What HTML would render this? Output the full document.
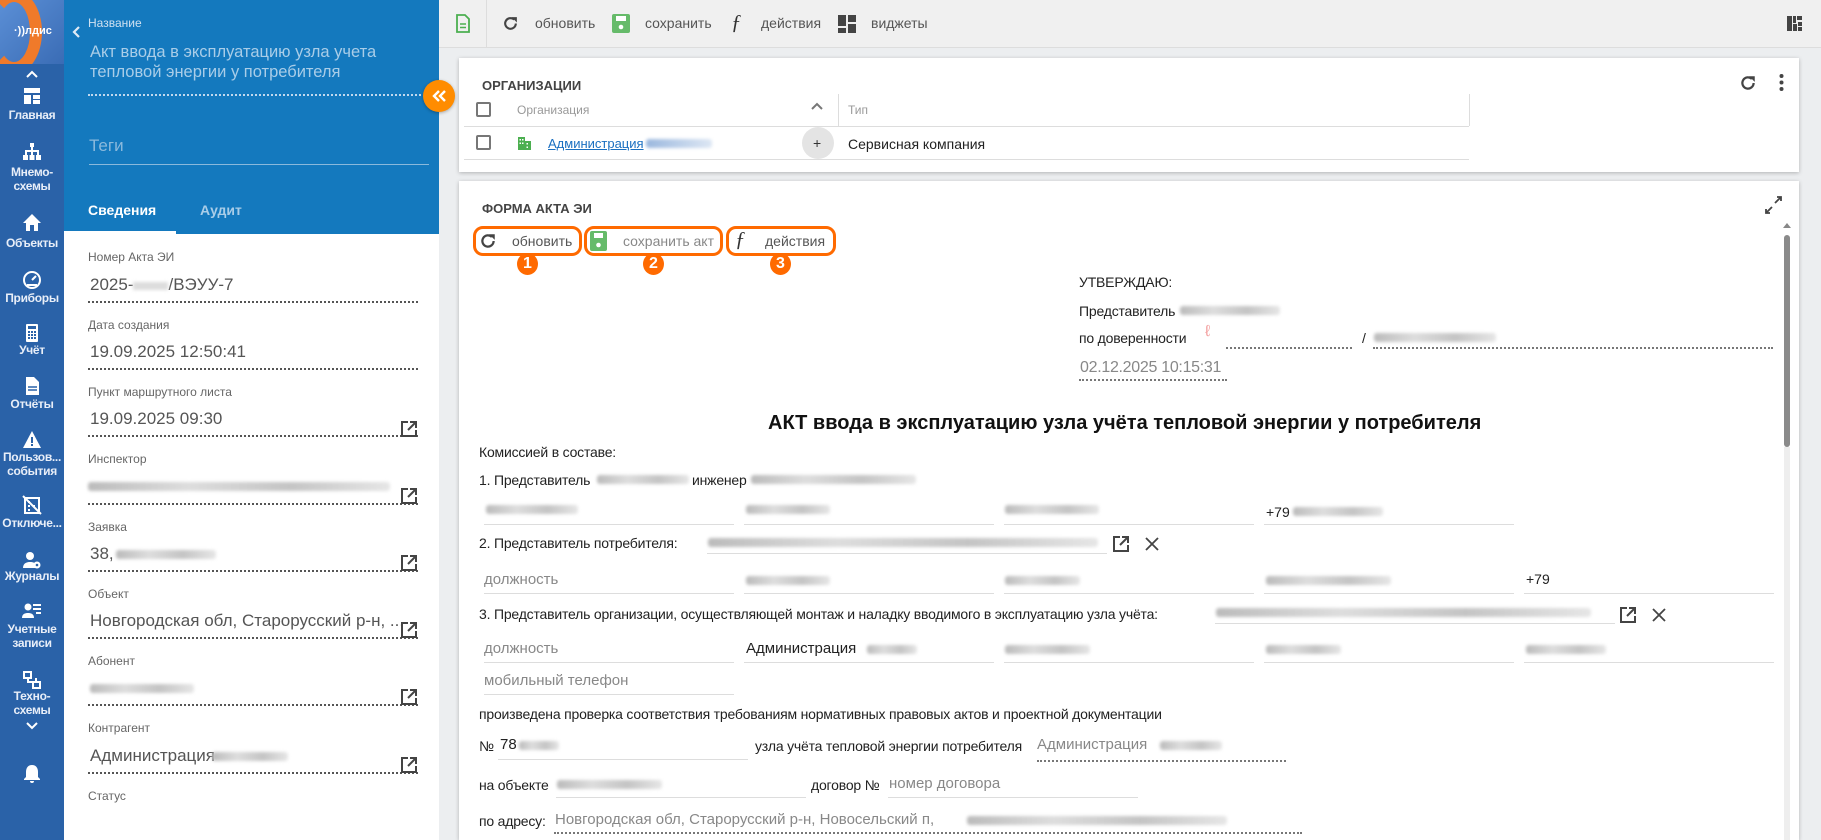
<!DOCTYPE html>
<html><head><meta charset="utf-8">
<style>
*{box-sizing:border-box;margin:0;padding:0}
html,body{width:1821px;height:840px;overflow:hidden}
body{background:#eceef0;font-family:"Liberation Sans","Noto Sans CJK SC",sans-serif;position:relative}
.a{position:absolute}
.t{position:absolute;white-space:nowrap;line-height:1}
.nav{left:0;top:0;width:64px;height:840px;background:#2a62a8}
.nl{position:absolute;left:0;width:64px;text-align:center;color:#e8eef8;font-size:12px;line-height:14px;font-weight:bold;letter-spacing:-.3px}
.ni{position:absolute;left:22px;width:20px;height:20px}
.side{left:64px;top:0;width:375px;height:840px;background:#fff}
.lab{font-size:12px;color:#666}
.val{font-size:17px;color:#555}
.dot{position:absolute;left:88px;width:330px;border-bottom:2px dotted #555}
.blur{position:absolute;height:9px;background:linear-gradient(90deg,#bbb,#ddd,#c4c4c4,#e6e6e6);filter:blur(1.5px);border-radius:3px}
.ext{position:absolute;width:18px;height:18px}
.f{font-size:14px;color:#222;letter-spacing:-.2px}
.g{color:#888}
.ul{position:absolute;border-bottom:1px solid #ddd}
.dl{position:absolute;border-bottom:2px dotted #777}
.card{position:absolute;background:#fff;box-shadow:0 1px 4px rgba(0,0,0,.25)}
.ob{position:absolute;border:3px solid #ff6a00;border-radius:10px;height:30px;top:226px}
.num{position:absolute;top:253px;width:21px;height:22px;border-radius:50%;background:#ff6a00;color:#fff;font-weight:bold;font-size:16px;text-align:center;line-height:22px}
.tb{font-size:14px;color:#555}
</style></head><body>

<!-- NAV -->
<div class="a nav">
 <div class="a" style="left:0;top:0;width:64px;height:64px;background:linear-gradient(135deg,#5b8fd6,#3a6cb5);overflow:hidden">
  <div class="a" style="left:-14px;top:-10px;width:56px;height:84px;border-radius:50%;border:12px solid #f07a2a;border-left-color:transparent;border-bottom-color:#f07a2a"></div>
  <div class="t" style="left:14px;top:26px;color:#fff;font-weight:bold;font-size:11px">·))лдис</div>
 </div>
 <svg class="a" style="left:26px;top:70px" width="12" height="8"><path d="M1 7L6 2L11 7" stroke="#fff" stroke-width="2" fill="none"/></svg>
 <svg class="ni" style="top:86px" viewBox="0 0 20 20"><path fill="#fff" d="M2 2h16v5H2zM2 9h7v9H2zM11 9h7v4h-7zM11 14h7v4h-7z"/></svg>
 <div class="nl" style="top:108px">Главная</div>
 <svg class="ni" style="top:142px" viewBox="0 0 20 20"><path fill="#fff" d="M8 1h4v4H8zM9 5h2v3H9zM3 8h14v2H3zM3 9h2v4H3zM9 9h2v4H9zM15 9h2v4h-2zM1 13h5v5H1zM7.5 13h5v5h-5zM14 13h5v5h-5z"/></svg>
 <div class="nl" style="top:165px">Мнемо-<br>схемы</div>
 <svg class="ni" style="top:213px" viewBox="0 0 20 20"><path fill="#fff" d="M10 1L1 10h3v8h4v-6h4v6h4v-8h3z"/></svg>
 <div class="nl" style="top:236px">Объекты</div>
 <svg class="ni" style="top:270px" viewBox="0 0 20 20"><circle cx="10" cy="10" r="8" stroke="#fff" stroke-width="2" fill="none"/><path d="M10 10l4-4" stroke="#fff" stroke-width="2"/><path d="M5 15h10" stroke="#fff" stroke-width="2"/></svg>
 <div class="nl" style="top:291px">Приборы</div>
 <svg class="ni" style="top:323px" viewBox="0 0 20 20"><rect x="4" y="1" width="12" height="18" rx="1" fill="#fff"/><rect x="6" y="3" width="8" height="3" fill="#2a62a8"/><path fill="#2a62a8" d="M6 8h2v2H6zM9 8h2v2H9zM12 8h2v2h-2zM6 11h2v2H6zM9 11h2v2H9zM12 11h2v2h-2zM6 14h2v2H6zM9 14h2v2H9zM12 14h2v2h-2z"/></svg>
 <div class="nl" style="top:343px">Учёт</div>
 <svg class="ni" style="top:376px" viewBox="0 0 20 20"><path fill="#fff" d="M4 1h8l5 5v13H4z"/><path stroke="#2a62a8" stroke-width="1.6" d="M6 11h9M6 14h9"/></svg>
 <div class="nl" style="top:397px">Отчёты</div>
 <svg class="ni" style="top:430px" viewBox="0 0 20 20"><path fill="#fff" d="M10 1L19 18H1z"/><path stroke="#2a62a8" stroke-width="2" d="M10 7v6M10 14v2"/></svg>
 <div class="nl" style="top:450px">Пользов...<br>события</div>
 <svg class="ni" style="top:495px" viewBox="0 0 20 20"><rect x="3" y="3" width="14" height="15" stroke="#fff" stroke-width="2" fill="none"/><path stroke="#fff" stroke-width="2" d="M1 1l18 18M6 7h2M6 11h2M11 11h2M6 15h2"/></svg>
 <div class="nl" style="top:516px">Отключе...</div>
 <svg class="ni" style="top:551px" viewBox="0 0 20 20"><circle cx="8" cy="5" r="4" fill="#fff"/><path fill="#fff" d="M1 17c0-5 4-6 7-6s5 1 6 2v4z"/><circle cx="15" cy="14" r="3.5" fill="#fff"/><circle cx="15" cy="14" r="1.3" fill="#2a62a8"/></svg>
 <div class="nl" style="top:569px">Журналы</div>
 <svg class="ni" style="top:601px" viewBox="0 0 20 20"><circle cx="6" cy="6" r="3.5" fill="#fff"/><path fill="#fff" d="M0 17c0-4 3-5 6-5s6 1 6 5z"/><path stroke="#fff" stroke-width="2" d="M11 4h8M11 8h8M14 12h5"/></svg>
 <div class="nl" style="top:622px">Учетные<br>записи</div>
 <svg class="ni" style="top:670px" viewBox="0 0 20 20"><path stroke="#fff" stroke-width="2" fill="none" d="M2 2h7v6H2zM11 12h7v6h-7zM6 8v4h4M14 8v4"/></svg>
 <div class="nl" style="top:689px">Техно-<br>схемы</div>
 <svg class="a" style="left:26px;top:722px" width="12" height="8"><path d="M1 1L6 6L11 1" stroke="#fff" stroke-width="2" fill="none"/></svg>
 <svg class="a" style="left:23px;top:764px" width="18" height="20" viewBox="0 0 18 20"><path fill="#fff" d="M9 1c-4 0-6 3-6 7v5l-2 2v1h16v-1l-2-2V8c0-4-2-7-6-7zM7 17h4a2 2 0 0 1-4 0z"/></svg>
</div>

<!-- SIDE PANEL -->
<div class="a side">
 <div class="a" style="left:0;top:0;width:375px;height:234px;background:#1479be"></div>
 <div class="a" style="left:0;top:231px;width:112px;height:3px;background:#fff"></div>
</div>
<svg class="a" style="left:71px;top:25px" width="10" height="14"><path d="M8 2L3 7L8 12" stroke="#dfeaf5" stroke-width="2.2" fill="none"/></svg>
<div class="t" style="left:88px;top:17px;font-size:12px;color:#cfe1f1">Название</div>
<div class="t" style="left:90px;top:42px;font-size:16.5px;color:#a9cde8;line-height:20px">Акт ввода в эксплуатацию узла учета<br>тепловой энергии у потребителя</div>
<div class="a" style="left:88px;top:94px;width:333px;border-bottom:2px dotted #c0d8ee"></div>
<div class="t" style="left:89px;top:137px;font-size:17px;color:#8ab9dc">Теги</div>
<div class="a" style="left:89px;top:164px;width:340px;border-bottom:1px solid #8ab9dc"></div>
<div class="t" style="left:88px;top:203px;font-size:14px;color:#fff;font-weight:bold">Сведения</div>
<div class="t" style="left:200px;top:203px;font-size:14px;color:#a9cde8;font-weight:bold">Аудит</div>
<div class="a" style="left:423px;top:80px;width:32px;height:32px;border-radius:50%;background:#ff8c00;box-shadow:0 1px 3px rgba(0,0,0,.3)"></div>
<svg class="a" style="left:431px;top:89px" width="16" height="14"><path d="M8 2L3 7L8 12M14 2L9 7L14 12" stroke="#fff" stroke-width="2.4" fill="none"/></svg>

<div class="t lab" style="left:88px;top:251px">Номер Акта ЭИ</div>
<div class="t val" style="left:90px;top:276px">2025-<span style="display:inline-block;width:35px;height:8px;background:#ddd;filter:blur(1.5px)"></span>/ВЭУУ-7</div>
<div class="dot" style="top:301px"></div>
<div class="t lab" style="left:88px;top:319px">Дата создания</div>
<div class="t val" style="left:90px;top:343px">19.09.2025 12:50:41</div>
<div class="dot" style="top:368px"></div>
<div class="t lab" style="left:88px;top:386px">Пункт маршрутного листа</div>
<div class="t val" style="left:90px;top:410px">19.09.2025 09:30</div>
<div class="dot" style="top:435px"></div>
<div class="t lab" style="left:88px;top:453px">Инспектор</div>
<div class="blur" style="left:88px;top:482px;width:302px"></div>
<div class="dot" style="top:503px"></div>
<div class="t lab" style="left:88px;top:521px">Заявка</div>
<div class="t val" style="left:90px;top:545px">38,</div>
<div class="blur" style="left:116px;top:550px;width:100px"></div>
<div class="dot" style="top:570px"></div>
<div class="t lab" style="left:88px;top:588px">Объект</div>
<div class="t val" style="left:90px;top:612px">Новгородская обл, Старорусский р-н, ...</div>
<div class="dot" style="top:637px"></div>
<div class="t lab" style="left:88px;top:655px">Абонент</div>
<div class="blur" style="left:90px;top:684px;width:104px"></div>
<div class="dot" style="top:704px"></div>
<div class="t lab" style="left:88px;top:722px">Контрагент</div>
<div class="t val" style="left:90px;top:747px">Администрация</div>
<div class="blur" style="left:212px;top:752px;width:76px"></div>
<div class="dot" style="top:772px"></div>
<div class="t lab" style="left:88px;top:790px">Статус</div>
<svg width="0" height="0" style="position:absolute"><defs><g id="ext"><path d="M8 2H2v14h14v-6" stroke="#444" stroke-width="2" fill="none"/><path d="M10 2h6v6M16 2L8 10" stroke="#444" stroke-width="2" fill="none"/></g></defs></svg>
<svg class="ext" style="left:400px;top:420px"><use href="#ext"/></svg>
<svg class="ext" style="left:400px;top:487px"><use href="#ext"/></svg>
<svg class="ext" style="left:400px;top:554px"><use href="#ext"/></svg>
<svg class="ext" style="left:400px;top:621px"><use href="#ext"/></svg>
<svg class="ext" style="left:400px;top:688px"><use href="#ext"/></svg>
<svg class="ext" style="left:400px;top:756px"><use href="#ext"/></svg>

<!-- TOOLBAR -->
<div class="a" style="left:439px;top:0;width:1382px;height:48px;background:#f0f0f0;border-bottom:1px solid #ddd"></div>
<svg class="a" style="left:456px;top:14px" width="14" height="19" viewBox="0 0 14 19"><path d="M1 1h8l4 4v13H1z" stroke="#4caf50" stroke-width="1.8" fill="none"/><path d="M4 10h6M4 13.5h6" stroke="#4caf50" stroke-width="1.6"/></svg>
<div class="a" style="left:486px;top:0;height:48px;border-left:1px solid #ddd"></div>
<svg class="a" style="left:502px;top:15px" width="17" height="17" viewBox="0 0 16 16"><path d="M13 8a5 5 0 1 1-1.5-3.6" stroke="#444" stroke-width="2" fill="none"/><path d="M9 2h5v5z" fill="#444"/></svg>
<div class="t tb" style="left:535px;top:16px">обновить</div>
<svg class="a" style="left:612px;top:14px" width="18" height="19"><rect width="18" height="19" rx="2" fill="#66bb6a"/><rect x="4" y="2" width="10" height="5" fill="#fff"/><circle cx="9" cy="13" r="2.3" fill="#fff"/></svg>
<div class="t tb" style="left:645px;top:16px">сохранить</div>
<div class="t" style="left:731px;top:12px;font-size:21px;font-style:italic;font-family:'Liberation Serif',serif;color:#333">ƒ</div>
<div class="t tb" style="left:761px;top:16px">действия</div>
<svg class="a" style="left:838px;top:15px" width="18" height="18"><path fill="#444" d="M0 0h8v11H0zM10 0h8v7h-8zM10 9h8v9h-8zM0 13h8v5H0z"/></svg>
<div class="t tb" style="left:871px;top:16px">виджеты</div>
<svg class="a" style="left:1787px;top:16px" width="16" height="15"><path fill="#444" d="M0 0h5v15H0zM6 0h3v7H6zM10 0h5v4h-5zM6 8h4v7H6zM11 6h4v4h-4zM11 11h4v4h-4z"/></svg>

<!-- CARD 1 -->
<div class="card" style="left:459px;top:58px;width:1340px;height:114px"></div>
<div class="t" style="left:482px;top:79px;font-size:13px;font-weight:bold;color:#444">ОРГАНИЗАЦИИ</div>
<div class="a" style="left:476px;top:102px;width:15px;height:15px;border:2px solid #777;border-radius:2px"></div>
<div class="t" style="left:517px;top:104px;font-size:12px;color:#999">Организация</div>
<svg class="a" style="left:811px;top:102px" width="12" height="8"><path d="M1 7L6 2L11 7" stroke="#777" stroke-width="2" fill="none"/></svg>
<div class="a" style="left:838px;top:94px;height:32px;border-left:1px solid #ddd"></div>
<div class="t" style="left:848px;top:104px;font-size:12px;color:#999">Тип</div>
<div class="a" style="left:464px;top:126px;width:1005px;border-bottom:1px solid #ddd"></div>
<div class="a" style="left:1469px;top:94px;height:32px;border-left:1px solid #ddd"></div>
<div class="a" style="left:476px;top:135px;width:15px;height:15px;border:2px solid #777;border-radius:2px"></div>
<svg class="a" style="left:518px;top:137px" width="13" height="13"><path fill="#4caf50" d="M0 0h7v13H0zM7 4h6v9H7z"/><path fill="#fff" d="M1.5 2h1.5v1.5H1.5zM4 2h1.5v1.5H4zM1.5 5.5h1.5v1.5H1.5zM4 5.5h1.5v1.5H4zM8.5 6h1.5v1.5H8.5zM8.5 9.5h1.5v1.5H8.5z"/></svg>
<div class="t" style="left:548px;top:137px;font-size:13px;color:#1a6fc0;text-decoration:underline">Администрация</div>
<div class="blur" style="left:646px;top:139px;width:66px;background:linear-gradient(90deg,#9bb8de,#dde7f4)"></div>
<div class="a" style="left:802px;top:127px;width:32px;height:32px;border-radius:50%;background:#e4e4e4"></div>
<div class="t" style="left:813px;top:136px;font-size:14px;color:#333">+</div>
<div class="t" style="left:848px;top:137px;font-size:14px;color:#222">Сервисная компания</div>
<div class="a" style="left:464px;top:159px;width:1005px;border-bottom:1px solid #ddd"></div>
<svg class="a" style="left:1739px;top:74px" width="18" height="18" viewBox="0 0 16 16"><path d="M13 8a5 5 0 1 1-1.5-3.6" stroke="#444" stroke-width="2" fill="none"/><path d="M9 2h5v5z" fill="#444"/></svg>
<svg class="a" style="left:1779px;top:74px" width="5" height="17"><circle cx="2.5" cy="2" r="2" fill="#444"/><circle cx="2.5" cy="8.5" r="2" fill="#444"/><circle cx="2.5" cy="15" r="2" fill="#444"/></svg>

<!-- CARD 2 -->
<div class="card" style="left:459px;top:181px;width:1340px;height:659px"></div>
<div class="t" style="left:482px;top:202px;font-size:13px;font-weight:bold;color:#444">ФОРМА АКТА ЭИ</div>
<svg class="a" style="left:1764px;top:196px" width="19" height="18"><path d="M11 7L17 1M13 1h4v4M8 11L2 17M2 13v4h4" stroke="#444" stroke-width="1.8" fill="none"/></svg>
<svg class="a" style="left:1783px;top:222px" width="8" height="6"><path d="M0 6L4 1L8 6z" fill="#888"/></svg>
<div class="a" style="left:1784px;top:235px;width:6px;height:212px;border-radius:3px;background:#8a8a8a"></div>
<div class="a" style="left:1784px;top:447px;width:6px;height:400px;background:#eee"></div>

<div class="ob" style="left:473px;width:109px"></div>
<div class="ob" style="left:584px;width:139px"></div>
<div class="ob" style="left:726px;width:110px"></div>
<svg class="a" style="left:479px;top:232px" width="18" height="18" viewBox="0 0 16 16"><path d="M13 8a5 5 0 1 1-1.5-3.6" stroke="#444" stroke-width="2" fill="none"/><path d="M9 2h5v5z" fill="#444"/></svg>
<div class="t" style="left:512px;top:234px;font-size:14px;color:#555">обновить</div>
<svg class="a" style="left:590px;top:231px" width="17" height="20"><rect width="17" height="20" rx="2" fill="#66bb6a"/><rect x="4" y="2" width="9" height="5" fill="#fff"/><circle cx="8.5" cy="14" r="2.3" fill="#fff"/></svg>
<div class="t" style="left:623px;top:234px;font-size:14px;color:#888">сохранить акт</div>
<div class="t" style="left:735px;top:229px;font-size:21px;font-style:italic;font-family:'Liberation Serif',serif;color:#333">ƒ</div>
<div class="t" style="left:765px;top:234px;font-size:14px;color:#555">действия</div>
<div class="num" style="left:517px">1</div>
<div class="num" style="left:643px">2</div>
<div class="num" style="left:770px">3</div>

<div class="t f" style="left:1079px;top:275px">УТВЕРЖДАЮ:</div>
<div class="t f" style="left:1079px;top:304px">Представитель</div>
<div class="blur" style="left:1180px;top:306px;width:100px"></div>
<div class="t f" style="left:1079px;top:331px">по доверенности</div>
<div class="t" style="left:1205px;top:324px;font-size:16px;color:#f3a0a0">ℓ</div>
<div class="dl" style="left:1226px;top:347px;width:126px"></div>
<div class="t f" style="left:1362px;top:331px">/</div>
<div class="blur" style="left:1374px;top:333px;width:122px"></div>
<div class="dl" style="left:1373px;top:347px;width:400px"></div>
<div class="t" style="left:1080px;top:360px;font-size:16px;color:#888;letter-spacing:-.3px">02.12.2025 10:15:31</div>
<div class="dl" style="left:1079px;top:379px;width:148px"></div>

<div class="t" style="left:768px;top:413px;font-size:20px;font-weight:bold;color:#111">АКТ ввода в эксплуатацию узла учёта тепловой энергии у потребителя</div>
<div class="t f" style="left:479px;top:445px">Комиссией в составе:</div>
<div class="t f" style="left:479px;top:473px">1. Представитель</div>
<div class="blur" style="left:597px;top:475px;width:92px"></div>
<div class="t f" style="left:692px;top:473px">инженер</div>
<div class="blur" style="left:751px;top:475px;width:165px"></div>

<div class="blur" style="left:486px;top:505px;width:92px"></div>
<div class="ul" style="left:484px;top:524px;width:250px"></div>
<div class="blur" style="left:746px;top:505px;width:84px"></div>
<div class="ul" style="left:744px;top:524px;width:250px"></div>
<div class="blur" style="left:1005px;top:505px;width:94px"></div>
<div class="ul" style="left:1004px;top:524px;width:250px"></div>
<div class="t" style="left:1266px;top:505px;font-size:14px;color:#222">+79</div>
<div class="blur" style="left:1293px;top:507px;width:90px"></div>
<div class="ul" style="left:1264px;top:524px;width:250px"></div>

<div class="t f" style="left:479px;top:536px">2. Представитель потребителя:</div>
<div class="blur" style="left:708px;top:538px;width:390px"></div>
<div class="ul" style="left:707px;top:553px;width:400px"></div>
<svg class="ext" style="left:1112px;top:535px;width:17px;height:17px"><use href="#ext"/></svg>
<svg class="a" style="left:1145px;top:537px" width="14" height="14"><path d="M1 1l12 12M13 1L1 13" stroke="#444" stroke-width="1.8"/></svg>

<div class="t g" style="left:484px;top:572px;font-size:15px">должность</div>
<div class="ul" style="left:484px;top:593px;width:250px"></div>
<div class="blur" style="left:746px;top:576px;width:84px"></div>
<div class="ul" style="left:744px;top:593px;width:250px"></div>
<div class="blur" style="left:1005px;top:576px;width:75px"></div>
<div class="ul" style="left:1004px;top:593px;width:250px"></div>
<div class="blur" style="left:1266px;top:576px;width:125px"></div>
<div class="ul" style="left:1264px;top:593px;width:250px"></div>
<div class="t" style="left:1526px;top:572px;font-size:14px;color:#222">+79</div>
<div class="ul" style="left:1524px;top:593px;width:250px"></div>

<div class="t f" style="left:479px;top:607px">3. Представитель организации, осуществляющей монтаж и наладку вводимого в эксплуатацию узла учёта:</div>
<div class="blur" style="left:1216px;top:608px;width:375px"></div>
<div class="ul" style="left:1215px;top:623px;width:400px"></div>
<svg class="ext" style="left:1619px;top:606px;width:17px;height:17px"><use href="#ext"/></svg>
<svg class="a" style="left:1652px;top:608px" width="14" height="14"><path d="M1 1l12 12M13 1L1 13" stroke="#444" stroke-width="1.8"/></svg>

<div class="t g" style="left:484px;top:641px;font-size:15px">должность</div>
<div class="ul" style="left:484px;top:662px;width:250px"></div>
<div class="t" style="left:746px;top:641px;font-size:15px;color:#222">Администрация</div>
<div class="blur" style="left:867px;top:645px;width:50px"></div>
<div class="ul" style="left:744px;top:662px;width:250px"></div>
<div class="blur" style="left:1005px;top:645px;width:85px"></div>
<div class="ul" style="left:1004px;top:662px;width:250px"></div>
<div class="blur" style="left:1266px;top:645px;width:75px"></div>
<div class="ul" style="left:1264px;top:662px;width:250px"></div>
<div class="blur" style="left:1526px;top:645px;width:80px"></div>
<div class="ul" style="left:1524px;top:662px;width:250px"></div>

<div class="t g" style="left:484px;top:673px;font-size:15px">мобильный телефон</div>
<div class="ul" style="left:484px;top:694px;width:250px"></div>

<div class="t f" style="left:479px;top:707px">произведена проверка соответствия требованиям нормативных правовых актов и проектной документации</div>
<div class="t f" style="left:479px;top:739px">№</div>
<div class="t" style="left:500px;top:737px;font-size:15px;color:#222">78</div>
<div class="blur" style="left:519px;top:741px;width:40px"></div>
<div class="ul" style="left:498px;top:759px;width:250px"></div>
<div class="t f" style="left:755px;top:739px">узла учёта тепловой энергии потребителя</div>
<div class="t g" style="left:1037px;top:737px;font-size:15px">Администрация</div>
<div class="blur" style="left:1160px;top:741px;width:62px"></div>
<div class="dl" style="left:1037px;top:760px;width:249px"></div>
<div class="t f" style="left:479px;top:778px">на объекте</div>
<div class="blur" style="left:557px;top:780px;width:105px"></div>
<div class="ul" style="left:556px;top:797px;width:250px"></div>
<div class="t f" style="left:811px;top:778px">договор №</div>
<div class="t g" style="left:889px;top:776px;font-size:15px">номер договора</div>
<div class="ul" style="left:888px;top:797px;width:250px"></div>
<div class="t f" style="left:479px;top:814px">по адресу:</div>
<div class="t g" style="left:555px;top:812px;font-size:15px">Новгородская обл, Старорусский р-н, Новосельский п,</div>
<div class="blur" style="left:967px;top:816px;width:260px"></div>
<div class="dl" style="left:554px;top:832px;width:748px"></div>

</body></html>
